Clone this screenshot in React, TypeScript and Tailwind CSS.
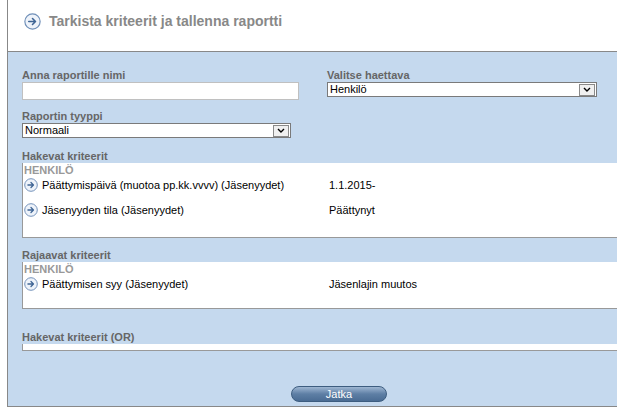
import React from "react";

function ArrowIcon({ size = 14 }: { size?: number }) {
  return (
    <svg width={size} height={size} viewBox="0 0 16 16" className="shrink-0">
      <circle cx="8" cy="8" r="7.2" fill="#eef3fa" stroke="#6f8fb8" strokeWidth="1.1" />
      <path d="M4.5 8h6M8 5.2 10.8 8 8 10.8" fill="none" stroke="#3f6595" strokeWidth="1.5" strokeLinecap="round" strokeLinejoin="round" />
    </svg>
  );
}

function Select({ value, className }: { value: string; className: string }) {
  return (
    <div className={`flex h-[15px] items-center justify-between border border-[#7a7a7a] bg-white ${className}`}>
      <span className="pl-[2px] text-[11px] leading-none text-black">{value}</span>
      <span className="mr-[1px] flex h-[12px] w-[16px] items-center justify-center border border-[#8a8a8a] bg-[#f0f0f0]">
        <svg width="8" height="5" viewBox="0 0 8 5"><path d="M1 1l3 3 3-3" fill="none" stroke="#000" strokeWidth="1.4" /></svg>
      </span>
    </div>
  );
}

function Label({ children }: { children: React.ReactNode }) {
  return <div className="text-[11px] font-bold leading-[13px] text-[#666]">{children}</div>;
}

function Row({ name, value }: { name: string; value: string }) {
  return (
    <div className="flex h-[16px] items-center">
      <div className="flex w-[305px] items-center gap-[4px]">
        <ArrowIcon />
        <span className="text-[11px] text-black">{name}</span>
      </div>
      <span className="text-[11px] text-black">{value}</span>
    </div>
  );
}

export default function App() {
  return (
    <div className="h-[415px] w-[617px] overflow-hidden bg-white" style={{ fontFamily: "'Liberation Sans', Arial, sans-serif" }}>
      <div className="ml-[7px] h-[407px] border-l border-b border-[#888]">
        <div className="flex h-[52px] items-start border-b border-[#888] pl-[16px] pt-[13px]">
          <ArrowIcon size={17} />
          <span className="ml-[8px] text-[14px] font-bold leading-[17px] text-[#888]">Tarkista kriteerit ja tallenna raportti</span>
        </div>
        <div className="flex h-[354px] flex-col bg-[#c5d9ee] pl-[14px] pt-[17px]">
          <div className="flex">
            <div className="w-[305px]">
              <Label>Anna raportille nimi</Label>
              <div className="h-[18px] w-[277px] border border-[#c0c0c0] bg-white" />
            </div>
            <div>
              <Label>Valitse haettava</Label>
              <Select value="Henkilö" className="w-[270px]" />
            </div>
          </div>
          <div className="mt-[10px]">
            <Label>Raportin tyyppi</Label>
            <Select value="Normaali" className="w-[269px]" />
          </div>
          <div className="mt-[12px]">
            <Label>Hakevat kriteerit</Label>
            <div className="h-[75px] border-l border-b border-[#999] bg-white pl-[1px] pt-[1px]">
              <div className="text-[11px] font-bold leading-[13px] text-[#999]">HENKILÖ</div>
              <Row name="Päättymispäivä (muotoa pp.kk.vvvv) (Jäsenyydet)" value="1.1.2015-" />
              <div className="h-[9px]" />
              <Row name="Jäsenyyden tila (Jäsenyydet)" value="Päättynyt" />
            </div>
          </div>
          <div className="mt-[11px]">
            <Label>Rajaavat kriteerit</Label>
            <div className="h-[47px] border-l border-b border-[#999] bg-white pl-[1px] pt-[1px]">
              <div className="text-[11px] font-bold leading-[13px] text-[#999]">HENKILÖ</div>
              <Row name="Päättymisen syy (Jäsenyydet)" value="Jäsenlajin muutos" />
            </div>
          </div>
          <div className="mt-[22px]">
            <Label>Hakevat kriteerit (OR)</Label>
            <div className="h-[7px] border-l border-b border-[#999] bg-white" />
          </div>
          <div className="mt-[35px] flex pl-[269px]">
            <div className="flex h-[16px] w-[96px] items-center justify-center rounded-full border border-[#3d5d80] bg-gradient-to-b from-[#9fb7d2] via-[#5e7fa5] to-[#4a6c93] text-[11px] text-white">
              Jatka
            </div>
          </div>
        </div>
      </div>
    </div>
  );
}
